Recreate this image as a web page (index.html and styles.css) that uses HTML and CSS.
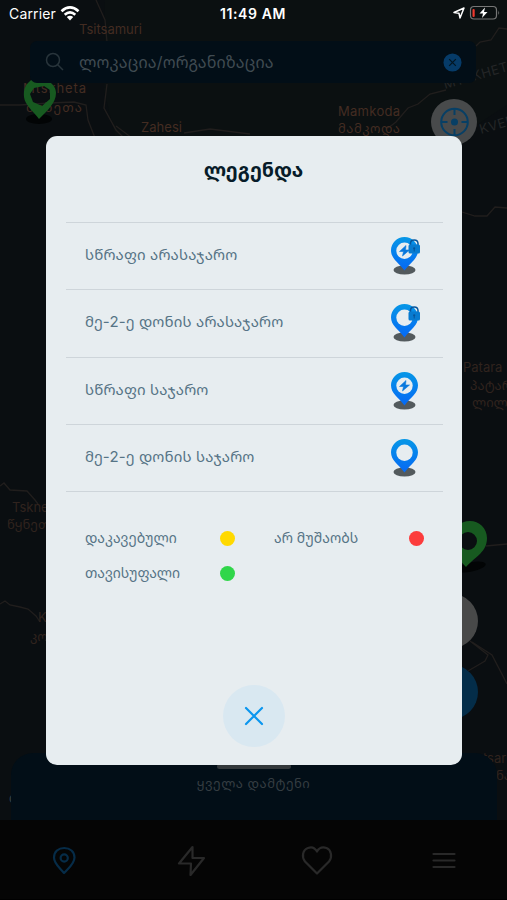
FILE: index.html
```html
<!DOCTYPE html>
<html lang="ka">
<head>
<meta charset="utf-8">
<title>ლეგენდა</title>
<link rel="stylesheet" href="styles.css">
</head>
<body>
<svg width="0" height="0" class="defs" aria-hidden="true">
  <defs>
    <linearGradient id="blue" x1="0" y1="0" x2="0" y2="1"><stop offset="0" stop-color="#0797e6"/><stop offset="1" stop-color="#0568f5"/></linearGradient>
    <symbol id="pin" viewBox="0 0 32 40">
      <ellipse cx="15.5" cy="34" rx="11" ry="4.6" fill="#535a5d"/>
      <path d="M15.500 1C8 1 2 7 2 14.300C2 22.500 9 26 15.500 34.500C22 26 29 22.500 29 14.300C29 7 23 1 15.500 1Z" fill="url(#blue)"/>
      <circle cx="15.500" cy="14.700" r="8.200" fill="#e7edf0"/>
    </symbol>
    <symbol id="spark" viewBox="0 0 32 40"><path d="M17 9.500L10.500 15.500H14.500L13.500 20L20.500 14H16.500Z" fill="#0878dd" stroke="#0878dd" stroke-width=".6"/></symbol>
    <symbol id="lock" viewBox="0 0 32 40">
      <path d="M21.500 11V7.500Q21.500 4 25.200 4T29 7.500V11" fill="none" stroke="#07549b" stroke-width="1.500"/>
      <rect x="19.500" y="8.500" width="11.500" height="9" rx="1.500" fill="#087bd0"/>
      <circle cx="25.200" cy="12.300" r="1.100" fill="#07549b"/><path d="M25.200 12V15.500" stroke="#07549b"/>
    </symbol>
  </defs>
</svg>
<div class="screen">
  <svg class="map" viewBox="0 0 507 900" aria-hidden="true">
    <rect width="507" height="900" fill="#0a0e11"/>
    <path d="M105 0H507V105L460 136H115L104 90Z" fill="#0b1011"/>
    <g fill="none" stroke="#211e1d" stroke-width="1.300">
      <path d="M96 0L105 20L107 42M107 84L104 108L116 130L124 138M0 105H20L50 103L74 102L86 105L88 120L95 138M116 126L132 138M184 133L210 129L250 134M507 29L499 28L491 40L480 42L476 46M446 90L430 94L418 104L408 108L396 122L388 128M462 212L475 216L487 216L495 207L507 208"/>
      <path d="M0 486L4 483L10 490L27 491L35 500L38 504M0 604L5 601L10 605L20 607L28 609L36 616L40 622M486 546L507 544M470 641L488 655L485 661L468 671M472 642L492 655L507 684"/>
    </g>
    <g class="place">
      <text x="79" y="34" textLength="63">Tsitsamuri</text>
      <text x="23" y="93" textLength="63">Mtskheta</text>
      <text x="26" y="112" textLength="56">მცხეთა</text>
      <text x="141" y="132" textLength="41">Zahesi</text>
      <text x="338" y="116" textLength="62">Mamkoda</text>
      <text x="338" y="133" textLength="62">მამკოდა</text>
    </g>
    <g class="place dim">
      <text x="463" y="372">Patara L</text><text x="470" y="390">პატარა</text><text x="472" y="407">ლილო</text>
      <text x="12" y="512">Tskneti</text><text x="7" y="529">წყნეთი</text>
      <text x="38" y="622">K</text><text x="30" y="641">კოჯ</text>
      <text x="467" y="763">Vetsari</text><text x="496" y="780">ნა</text>
    </g>
    <g class="region">
      <text transform="translate(445 89) rotate(-16)">MTSKHETI</text><text transform="translate(481 134) rotate(-16)">KVEMO</text>
    </g>
    <text x="9" y="803" fill="#3b4043" font-size="13">o</text>
    <ellipse cx="39" cy="119" rx="13" ry="5" fill="#020405"/>
    <path fill-rule="evenodd" fill="#175a20" d="M33 79C26 83 23 89 24 97C25 105 33 111 39 119C47 111 56 103 56 93C56 88 53 84 49 82C42 84 38 82 33 79ZM34 88L30 94L33 102L42 106L50 99L50 90L44 86Z"/>
    <ellipse cx="471" cy="567" rx="15" ry="4.500" transform="rotate(-12 471 567)" fill="#020405"/>
    <path fill-rule="evenodd" fill="#175a20" d="M470 521C479 521 487 528 487 538C487 552 476 556 466 567C459 560 453 552 453 539C453 528 460 521 470 521ZM468 532A9 9 0 1 0 468 550A9 9 0 1 0 468 532Z"/>
  </svg>

  <header class="status">
    <span class="carrier">Carrier</span>
    <svg class="wifi" viewBox="0 0 20 15"><g fill="none" stroke="#fff" stroke-width="2.700"><path d="M1.500 5.200Q10-2.300 18.500 5.200M4.700 8.700Q10 4.200 15.300 8.700"/></g><path d="M6.800 11Q10 8.500 13.200 11L10 14.500Z" fill="#fff"/></svg>
    <span class="time">11:49 AM</span>
    <svg class="power" viewBox="0 0 48 16"><path d="M2 7.500L12 3L8 13L7 8.300Z" fill="none" stroke="#fff" stroke-width="1.500" stroke-linejoin="round"/><rect x="18.500" y="1.500" width="26" height="12.500" rx="3.500" fill="none" stroke="#777" stroke-width="1.200"/><path d="M46.300 5.500Q48 7.700 46.300 10Z" fill="#777"/><rect x="20.500" y="4" width="2.200" height="8" rx="1" fill="#f0392e"/><path d="M33 2.500L27.500 8.500H31L30 13L35.500 7H32Z" fill="#fff"/></svg>
  </header>

  <div class="search">
    <svg class="glass" viewBox="0 0 20 20"><circle cx="8" cy="8" r="6.500"/><path d="M12.700 12.700L18 18"/></svg>
    <span class="query">ლოკაცია/ორგანიზაცია</span>
    <svg class="clear" viewBox="0 0 20 20"><circle cx="10" cy="10" r="9.500" fill="#063b68"/><path d="M6.500 6.500L13.500 13.500M13.500 6.500L6.500 13.500" stroke="#031622" stroke-width="1.300"/></svg>
  </div>

  <svg class="locate" viewBox="0 0 46 46"><circle cx="23" cy="23" r="23" fill="#484a4b"/><g fill="none" stroke="#073f65" stroke-width="2"><circle cx="23.500" cy="23" r="13.300"/><path d="M23.500 9.500V16M23.500 30V36.500M10 23H16.500M30.500 23H37"/></g><circle cx="23.500" cy="23" r="3.500" fill="#073f65"/></svg>
  <div class="fab fab-grey"></div>
  <div class="fab fab-blue"></div>

  <div class="bottom">
    <section class="sheet"><div class="handle"></div><span class="sheet-title">ყველა დამტენი</span></section>
    <nav class="tabs">
      <svg class="active" viewBox="0 0 32 32"><path d="M16 29C12 24 6 20 6 13.500C6 7.500 10.500 4 16.200 4S26.500 7.500 26.500 13.500C26.500 20 20.500 24 16 29Z"/><circle cx="16.200" cy="14" r="3.600"/></svg>
      <svg viewBox="0 0 32 32"><path d="M17.500 3L4 19.500H16L15.500 31L29 14H17.500Z"/></svg>
      <svg viewBox="0 0 32 32"><path d="M16 29.500L4 17.500C.5 13 1.500 6 7 4C10.500 2.700 14 4 16 7.500C18 4 21.500 2.700 25.500 4C30.500 6 31.500 13 28 17.500Z"/></svg>
      <svg viewBox="0 0 32 32"><path d="M5.500 10H26.500M5.500 16.500H26.500M5.500 23H26.500"/></svg>
    </nav>
  </div>

  <main class="modal">
    <h1 class="title">ლეგენდა</h1>
    <ul class="types">
      <li><span>სწრაფი არასაჯარო</span><svg viewBox="0 0 32 40"><use href="#pin"/><use href="#spark"/><use href="#lock"/></svg></li>
      <li><span>მე-2-ე დონის არასაჯარო</span><svg viewBox="0 0 32 40"><use href="#pin"/><use href="#lock"/></svg></li>
      <li><span>სწრაფი საჯარო</span><svg viewBox="0 0 32 40"><use href="#pin"/><use href="#spark"/></svg></li>
      <li><span>მე-2-ე დონის საჯარო</span><svg viewBox="0 0 32 40"><use href="#pin"/></svg></li>
    </ul>
    <div class="states">
      <div class="state"><span>დაკავებული</span><i class="dot yellow"></i></div>
      <div class="state"><span>არ მუშაობს</span><i class="dot red"></i></div>
      <div class="state"><span>თავისუფალი</span><i class="dot green"></i></div>
    </div>
    <button class="close" aria-label="დახურვა"><svg viewBox="0 0 20 20"><path d="M2 2L18 18M18 2L2 18"/></svg></button>
  </main>
</div>
</body>
</html>
```
FILE: styles.css
```css
* { box-sizing: border-box; }
body { margin: 0; background: #0a0e11; font-family: Inter, "Noto Sans Georgian", "DejaVu Sans", sans-serif; }
.defs { position: absolute; }
.screen { position: relative; width: 507px; height: 900px; overflow: hidden; }
.map { position: absolute; inset: 0; width: 507px; height: 900px; }
.place { fill: #432c22; font-size: 13px; }
.dim { fill: #30231e; }
.region { fill: #242627; font-size: 13px; letter-spacing: .5px; }

.status { position: relative; display: grid; grid-template-columns: 47px 20px 1fr 48px; column-gap: 5px; align-items: center; height: 28px; padding: 0 8px 0 9px; color: #fff; font-size: 14px; }
.carrier { letter-spacing: .15px; margin-top: -2px; }
.wifi { width: 20px; height: 15px; margin: -2px 0 0 -1px; }
.time { margin-top: -2px; font-weight: 600; text-align: center; padding-right: 26px; letter-spacing: .6px; white-space: nowrap; }
.power { width: 48px; height: 16px; margin: -2px 0 0 1px; }

.search { position: relative; display: flex; align-items: center; width: 446px; height: 42px; margin: 13px 0 0 30px; padding: 0 14px 0 15px; background: #020e17; border-radius: 7px; }
.glass { width: 20px; height: 20px; fill: none; stroke: #28343b; stroke-width: 1.5; }
.query { flex: 1; margin-left: 14px; color: #404b52; font-size: 16px; letter-spacing: .15px; white-space: nowrap; }
.clear { width: 19px; height: 19px; }

.locate { position: absolute; left: 431px; top: 99px; width: 46px; height: 46px; }
.fab { position: absolute; left: 426px; width: 52px; height: 54px; border-radius: 50%; }
.fab-grey { top: 594px; background: #484949; }
.fab-blue { top: 665px; background: #042d49; }

.bottom { position: absolute; left: 0; right: 0; bottom: 0; }
.sheet { display: flex; flex-direction: column; align-items: center; height: 67px; margin: 0 10px 0 11px; padding-top: 11px; background: #020e17; border-radius: 22px 22px 0 0; }
.handle { width: 74px; height: 5px; background: #33383b; border-radius: 3px; }
.sheet-title { margin-top: 4px; padding-right: 1px; color: #353d42; font-size: 13px; letter-spacing: .5px; line-height: 20px; white-space: nowrap; }
.tabs { display: flex; height: 80px; padding-left: 1px; justify-content: space-around; align-items: center; background: #050505; border-bottom: 1px solid #000; }
.tabs svg { width: 32px; height: 32px; fill: none; stroke: #292929; stroke-width: 2.2; stroke-linejoin: round; stroke-linecap: round; }
.tabs .active { stroke: #062c48; }

.modal { position: absolute; left: 46px; top: 136px; display: flex; flex-direction: column; width: 416px; height: 629px; padding: 0 19px 0 20px; background: #e7edf0; border-radius: 11px; }
.title { height: 86px; margin: 0; padding: 20px 2px 0 0; text-align: center; color: #071c29; font-size: 19.6px; font-weight: 700; line-height: 28px; }
.types { margin: 0; padding: 0; list-style: none; border-top: 1px solid #ced5da; }
.types li { display: flex; align-items: center; justify-content: space-between; height: 67.25px; padding: 0 22px 0 19px; border-bottom: 1px solid #ced5da; color: #567486; font-size: 15px; letter-spacing: .13px; white-space: nowrap; }
.types span { padding-bottom: 4px; }
.types svg { width: 32px; height: 40px; }
.states { display: grid; grid-template-columns: 150px 150px; column-gap: 39px; padding: 29px 0 0 19px; }
.state { display: flex; align-items: center; justify-content: space-between; height: 35px; color: #567486; font-size: 14px; white-space: nowrap; }
.state span { padding-bottom: 2px; }
.dot { width: 15px; height: 15px; margin-right: .5px; border-radius: 50%; }
.yellow { background: #ffd900; }
.red { background: #fc3c3c; }
.green { background: #30d64a; }
.close { display: grid; place-items: center; width: 62px; height: 62px; margin: auto auto 18.5px 157px; padding: 0; border: 0; border-radius: 50%; background: #d9e8f1; }
.close svg { width: 20px; height: 20px; fill: none; stroke: #0b96ef; stroke-width: 2.2; stroke-linecap: round; }
```
